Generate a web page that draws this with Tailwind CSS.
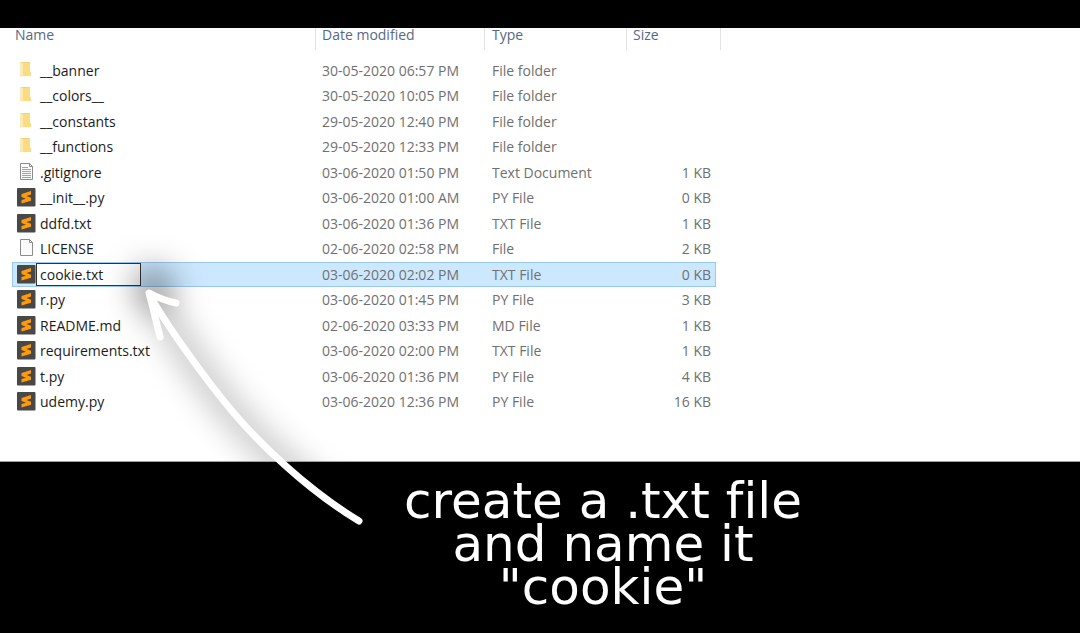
<!DOCTYPE html>
<html lang="en">
<head>
<meta charset="utf-8">
<meta name="viewport" content="width=device-width, initial-scale=1">
<title>Create cookie.txt</title>
<script src="https://cdn.jsdelivr.net/npm/@tailwindcss/browser@4"></script>
</head>
<body class="relative min-h-screen overflow-x-hidden bg-black pt-7">
<svg class="hidden" aria-hidden="true">
  <symbol id="folder" viewBox="0 0 20 20">
    <path d="M4 1h10v10l1 1v3H4z" fill="#f3d27c"/>
    <path d="M4 1l3 1v14l-3-2z" fill="#faeab8"/>
    <path d="M7 2h7v9l1 1v3H7z" fill="#fbdc80"/>
  </symbol>
  <symbol id="text" viewBox="0 0 20 20">
    <path d="M4.500.500h9l3 3v13h-12z" fill="#fafafa" stroke="#8c8c8c"/>
    <path d="M13.500.500v3h3" fill="none" stroke="#8c8c8c"/>
    <path d="M6 4.500h6M6 6.500h9M6 8.500h9M6 10.500h9M6 12.500h9M6 14.500h9" stroke="#a2a2a2"/>
  </symbol>
  <symbol id="blank" viewBox="0 0 20 20">
    <path d="M4.500.500h9l3 3v13h-12z" fill="#fafafa" stroke="#8c8c8c"/>
    <path d="M13.500.500v3h3" fill="none" stroke="#8c8c8c"/>
  </symbol>
  <symbol id="sublime" viewBox="0 0 20 20">
    <rect x="1" y="0" width="18.500" height="18.500" rx="1" fill="#484848"/>
    <path d="M15 3v3.500L10.500 8l4.500 1.700v3L5.500 15.500V12l4.500-1.300-4.500-1.600V6z" fill="#ff9a0a"/>
  </symbol>
</svg>

<main class="border-b border-gray-400 bg-white pb-[46px] pl-3 font-['Open_Sans','Noto_Sans',sans-serif] text-[14px] leading-4 text-[#707070]">
  <table class="w-full max-w-[709px] table-fixed border-separate border-spacing-0 whitespace-nowrap">
    <colgroup><col class="w-[303px]"><col class="w-[169px]"><col class="w-[142px]"><col class="w-[90px]"><col class="w-[5px]"></colgroup>
    <thead class="text-left leading-[14px] text-[#57697f]">
      <tr class="h-[22px] align-top">
        <th scope="col" class="pl-[3px] font-normal">Name</th>
        <th scope="col" class="border-l border-[#e3e3e3] pl-[6px] font-normal">Date modified</th>
        <th scope="col" class="border-l border-[#e3e3e3] pl-[7px] font-normal">Type</th>
        <th scope="col" class="border-l border-[#e3e3e3] pl-[6px] font-normal">Size</th>
        <td class="border-r border-[#e3e3e3]"></td>
      </tr>
    </thead>
    <tbody id="files"><tr class="h-2"><td colspan="5"></td></tr></tbody>
  </table>
</main>

<p class="pt-[18px] pl-[126px] text-center font-['DejaVu_Sans',sans-serif] text-[50px] leading-[43px] text-white [font-variant-ligatures:none]">create a .txt file<br>and name it<br>"cookie"</p>

<svg class="pointer-events-none absolute top-0 left-0" width="400" height="540" viewBox="0 0 400 540" fill="none" stroke-linecap="round" stroke-linejoin="round" aria-hidden="true">
  <defs><filter id="soft" filterUnits="userSpaceOnUse" x="0" y="150" width="400" height="390"><feGaussianBlur stdDeviation="16"/></filter>
  <clipPath id="sheet"><path d="M0 0h400v461H0z"/></clipPath></defs>
  <g clip-path="url(#sheet)"><g filter="url(#soft)" stroke="#000" stroke-opacity=".32">
    <path d="M150 290C172 331 205 380 232 412S310 491 358 520" stroke-width="18"/>
    <path d="M152 300L147 278L164 284" stroke-width="26"/>
  </g></g>
  <path d="M150 295C164 322 206 380 232 411S306 489 359 521" stroke="#fff" stroke-width="7"/>
  <path d="M160 337C156 321 153 307 149 293Q162 300 176 303" stroke="#fff" stroke-width="7"/>
</svg>

<script>
const files = [
  ['folder','__banner','30-05-2020 06:57 PM','File folder',''],
  ['folder','__colors__','30-05-2020 10:05 PM','File folder',''],
  ['folder','__constants','29-05-2020 12:40 PM','File folder',''],
  ['folder','__functions','29-05-2020 12:33 PM','File folder',''],
  ['text','.gitignore','03-06-2020 01:50 PM','Text Document','1 KB'],
  ['sublime','__init__.py','03-06-2020 01:00 AM','PY File','0 KB'],
  ['sublime','ddfd.txt','03-06-2020 01:36 PM','TXT File','1 KB'],
  ['blank','LICENSE','02-06-2020 02:58 PM','File','2 KB'],
  ['sublime','cookie.txt','03-06-2020 02:02 PM','TXT File','0 KB'],
  ['sublime','r.py','03-06-2020 01:45 PM','PY File','3 KB'],
  ['sublime','README.md','02-06-2020 03:33 PM','MD File','1 KB'],
  ['sublime','requirements.txt','03-06-2020 02:00 PM','TXT File','1 KB'],
  ['sublime','t.py','03-06-2020 01:36 PM','PY File','4 KB'],
  ['sublime','udemy.py','03-06-2020 12:36 PM','PY File','16 KB'],
];
document.getElementById('files').innerHTML += files.map(([icon, name, date, type, size]) => {
  const sel = name === 'cookie.txt';
  const cell = sel ? 'border-y border-[#99c9ef] bg-[#cce8ff]' : '';
  const label = sel
    ? '<input aria-label="File name" value="cookie.txt" class="h-[23px] w-[105px] border border-[#333] bg-white pl-[3px] text-[#1c1c1c] outline-none">'
    : `<span class="pl-1 text-[#1c1c1c]">${name}</span>`;
  return `<tr class="h-[25px] odd:h-[26px]">
    <td class="${cell} ${sel ? 'border-l pl-[3px]' : 'pl-1'} p-0"><div class="flex items-center"><svg class="size-5 shrink-0" aria-hidden="true"><use href="#${icon}"/></svg>${label}</div></td>
    <td class="${cell} p-0 pl-[7px]">${date}</td>
    <td class="${cell} p-0 pl-2">${type}</td>
    <td class="${cell} ${sel ? 'border-r pr-1' : 'pr-[5px]'} p-0 text-right">${size}</td>
    <td class="p-0"></td></tr>`;
}).join('');
</script>
</body>
</html>
